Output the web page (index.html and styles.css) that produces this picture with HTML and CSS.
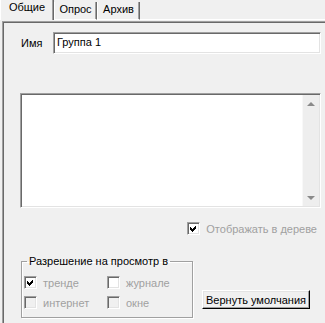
FILE: index.html
```html
<!DOCTYPE html>
<html lang="ru">

<head>
    <meta charset="UTF-8">
    <title>Группа</title>
    <link rel="stylesheet" href="styles.css">
</head>

<body>

    <div class="tabs">
        <div class="tab active">Общие</div>
        <div class="tab tab-poll">Опрос</div>
        <div class="tab tab-archive">Архив</div>
        <div class="tab-rest"></div>
    </div>

    <div class="page">
        <div class="name-row">
            <label class="name-label">Имя</label>
            <div class="edit sunken">Группа 1</div>
        </div>

        <div class="list sunken">
            <div class="list-body"></div>
            <div class="scroll">
                <span class="arrow-up"></span>
                <span class="arrow-down"></span>
            </div>
        </div>

        <div class="check-row">
            <span class="box sunken">
                <svg width="7" height="7" viewBox="0 0 7 7"><path d="M0 2 L2 4 L6 0 L6 3 L2 7 L0 5 Z" fill="#000" shape-rendering="crispEdges"/></svg>
            </span>
            <span class="check-text disabled">Отображать в дереве</span>
        </div>

        <div class="bottom-row">
            <fieldset class="group">
                <legend>Разрешение на просмотр в</legend>
                <div class="group-grid">
                    <div class="check">
                        <span class="box sunken">
                            <svg width="7" height="7" viewBox="0 0 7 7"><path d="M0 2 L2 4 L6 0 L6 3 L2 7 L0 5 Z" fill="#000" shape-rendering="crispEdges"/></svg>
                        </span>
                        <span class="check-text disabled">тренде</span>
                    </div>
                    <div class="check">
                        <span class="box sunken"></span>
                        <span class="check-text disabled">журнале</span>
                    </div>
                    <div class="check">
                        <span class="box sunken off"></span>
                        <span class="check-text disabled">интернет</span>
                    </div>
                    <div class="check">
                        <span class="box sunken off"></span>
                        <span class="check-text disabled">окне</span>
                    </div>
                </div>
            </fieldset>
            <button class="btn">Вернуть умолчания</button>
        </div>
    </div>

</body>

</html>
```

FILE: styles.css
```css
* {
    box-sizing: border-box;
}

body {
    margin: 0;
    width: 325px;
    height: 323px;
    overflow: hidden;
    background-color: #f0f0f0;
    font-family: 'Liberation Sans', Arial, sans-serif;
    font-size: 11px;
    color: #000;
}

/* tab strip */
.tabs {
    display: flex;
    height: 20px;
}

.tab {
    height: 20px;
    padding-top: 3px;
    text-align: center;
    line-height: 13px;
    border-left: 1px solid #fff;
    border-right: 1px solid #696969;
    border-bottom: 1px solid #fff;
    box-shadow: inset -1px 0 #a0a0a0;
}

.tab.active {
    width: 54px;
    padding-top: 1px;
    border-bottom: none;
}

.tab-poll {
    width: 43px;
    margin-top: 2px;
    height: 18px;
    padding-top: 1px;
}

.tab-archive {
    width: 43px;
    margin-top: 2px;
    height: 18px;
    padding-top: 1px;
}

.tab-rest {
    flex: 1;
    border-bottom: 1px solid #fff;
}

/* page */
.page {
    margin: 1px 0 0 2px;
    height: 302px;
    padding: 10px 4px 0 17px;
    border-top: 1px solid #a0a0a0;
    border-left: 1px solid #a0a0a0;
    box-shadow: inset 1px 1px #696969;
}

.sunken {
    border: 1px solid;
    border-color: #a0a0a0 #fff #fff #a0a0a0;
    box-shadow: inset 1px 1px #696969, inset -1px -1px #e3e3e3;
    background-color: #fff;
}

.name-row {
    display: flex;
    align-items: center;
    height: 22px;
}

.name-label {
    width: 33px;
    padding-left: 1px;
}

.edit {
    flex: 1;
    height: 22px;
    padding: 0 3px;
    line-height: 19px;
}

.list {
    display: flex;
    margin-top: 39px;
    height: 115px;
    padding: 1px;
}

.list-body {
    flex: 1;
}

.scroll {
    width: 17px;
    display: flex;
    flex-direction: column;
    align-items: center;
    justify-content: space-between;
    padding: 7px 0 6px;
    background-color: #eeeeee;
    border-left: 1px solid #f8f8f8;
}

.arrow-up {
    border-left: 4px solid transparent;
    border-right: 4px solid transparent;
    border-bottom: 4px solid #8a8a8a;
}

.arrow-down {
    border-left: 4px solid transparent;
    border-right: 4px solid transparent;
    border-top: 4px solid #8a8a8a;
}

/* check boxes */
.check-row {
    display: flex;
    align-items: center;
    justify-content: flex-end;
    margin-top: 14px;
    height: 13px;
    padding-right: 4px;
}

.box {
    width: 13px;
    height: 13px;
    flex: none;
    display: flex;
    align-items: center;
    justify-content: center;
}

.box.off {
    background-color: #f0f0f0;
}

.check-text {
    margin-left: 6px;
}

.disabled {
    color: #a0a0a0;
}

/* group box and button */
.bottom-row {
    display: flex;
    margin-top: 20px;
}

.group {
    width: 172px;
    margin: 0 0 0 1px;
    padding: 0 0 8px 2px;
    border: 1px solid #a0a0a0;
    box-shadow: 1px 1px 0 #fff, inset 1px 1px 0 #fff;
}

.group legend {
    margin-left: 3px;
    padding: 0 2px;
    line-height: 13px;
}

.group-grid {
    display: grid;
    grid-template-columns: 83px 1fr;
    row-gap: 7px;
    padding-top: 8px;
}

.check {
    display: flex;
    align-items: center;
    height: 13px;
}

.btn {
    align-self: flex-end;
    width: 108px;
    height: 19px;
    margin: 0 0 9px 9px;
    padding: 0;
    font-family: 'Liberation Sans', Arial, sans-serif;
    font-size: 11px;
    color: #000;
    background-color: #f0f0f0;
    border: 1px solid;
    border-color: #fff #000 #000 #fff;
    box-shadow: inset -1px -1px #a0a0a0, inset 1px 1px #e3e3e3;
}
```
